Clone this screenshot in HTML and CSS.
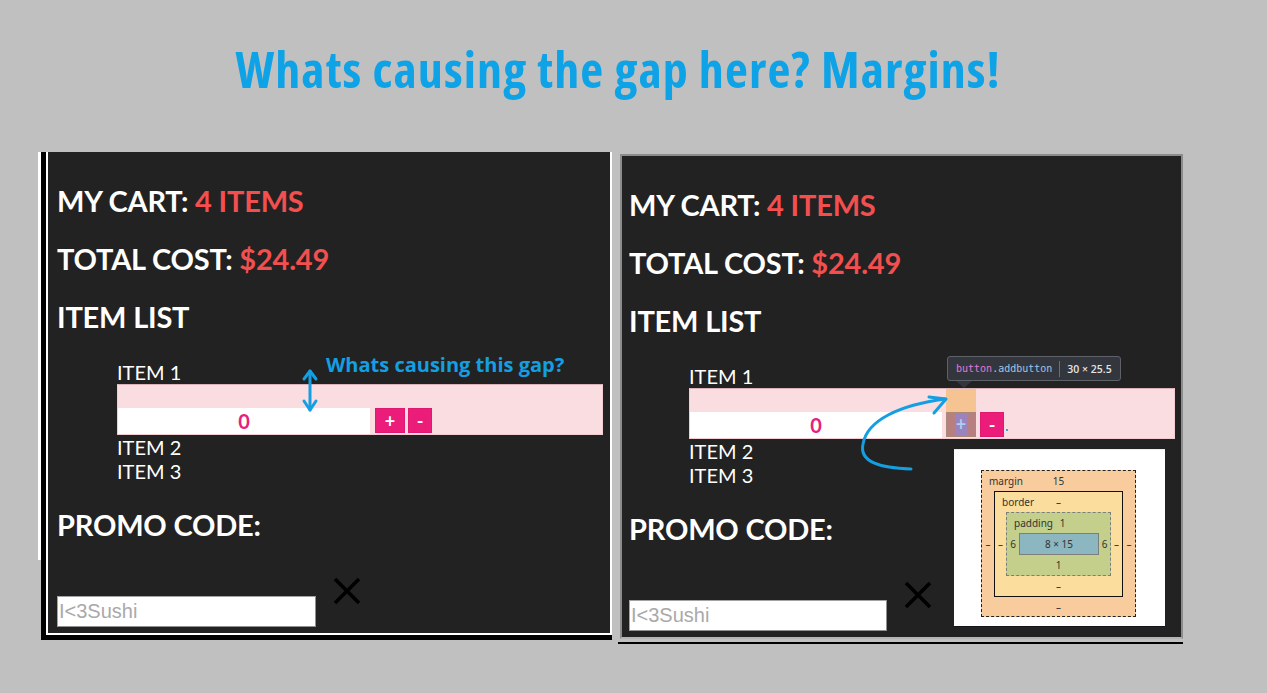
FILE: index.html
```html
<!DOCTYPE html>
<html lang="en">
<head>
<meta charset="utf-8">
<title>Margins</title>
<link rel="stylesheet" href="styles.css">
</head>
<body>
<h1 class="title">Whats causing the gap here? Margins!</h1>

<main class="stage">
  <div class="frame-left">
    <div class="frame-left-shadow">
      <section class="cart cart-left">
        <h2 class="stat">MY CART: <span class="hl">4 ITEMS</span></h2>
        <h2 class="stat">TOTAL COST: <span class="hl">$24.49</span></h2>
        <h2 class="stat">ITEM LIST</h2>
        <ul class="items">
          <li class="item-name">ITEM 1</li>
          <li class="item-row">
            <input class="qty" type="text" value="0" readonly>
            <button class="addbutton">+</button>
            <button class="subbutton">-</button>
          </li>
          <li class="item-name">ITEM 2</li>
          <li class="item-name">ITEM 3</li>
        </ul>
        <h2 class="stat promo-label">PROMO CODE:</h2>
        <div class="promo">
          <input class="promo-input" type="text" placeholder="I<3Sushi">
          <svg class="close" width="28" height="28" viewBox="0 0 28 28"><path d="M2 2 L26 26 M26 2 L2 26" stroke="#000" stroke-width="3.6" fill="none"/></svg>
        </div>
        <p class="note">Whats causing this gap?</p>
      </section>
    </div>
  </div>

  <div class="frame-right">
    <section class="cart cart-right">
      <h2 class="stat">MY CART: <span class="hl">4 ITEMS</span></h2>
      <h2 class="stat">TOTAL COST: <span class="hl">$24.49</span></h2>
      <h2 class="stat">ITEM LIST</h2>
      <ul class="items">
        <li class="item-name">ITEM 1</li>
        <li class="item-row">
          <input class="qty" type="text" value="0" readonly>
          <span class="inspect"><button class="addbutton addbutton-inspected"><span class="inspect-content">+</span></button></span>
          <button class="subbutton">-</button>
          <span class="dot"></span>
        </li>
        <li class="item-name">ITEM 2</li>
        <li class="item-name">ITEM 3</li>
      </ul>
      <h2 class="stat promo-label">PROMO CODE:</h2>
      <div class="promo">
        <input class="promo-input" type="text" placeholder="I<3Sushi">
        <svg class="close" width="28" height="28" viewBox="0 0 28 28"><path d="M2 2 L26 26 M26 2 L2 26" stroke="#000" stroke-width="3.6" fill="none"/></svg>
      </div>

      <div class="tooltip">
        <span class="tt-tag">button</span><span class="tt-cls">.addbutton</span>
        <span class="tt-sep"></span>
        <span class="tt-size">30 × 25.5</span>
      </div>

      <div class="boxmodel">
        <div class="bm bm-margin">
          <div class="bm-t"><span class="bm-lbl">margin</span>15</div>
          <div class="bm-l">–</div>
          <div class="bm bm-border">
            <div class="bm-t"><span class="bm-lbl">border</span>–</div>
            <div class="bm-l">–</div>
            <div class="bm bm-padding">
              <div class="bm-t"><span class="bm-lbl">padding</span>1</div>
              <div class="bm-l">6</div>
              <div class="bm-content">8 × 15</div>
              <div class="bm-r">6</div>
              <div class="bm-b">1</div>
            </div>
            <div class="bm-r">–</div>
            <div class="bm-b">–</div>
          </div>
          <div class="bm-r">–</div>
          <div class="bm-b">–</div>
        </div>
      </div>
    </section>
  </div>
</main>

<svg class="annot" width="1267" height="693" viewBox="0 0 1267 693">
  <g stroke="#139fe2" stroke-width="3" fill="none" stroke-linecap="round" stroke-linejoin="round">
    <path d="M310 371 L310 410"/>
    <path d="M304 379 L310 371 L316 379"/>
    <path d="M304 401 L310 410 L316 401"/>
    <path d="M911 469 C880 468, 859 462, 863 444 C867 420, 900 405, 945 399"/>
    <path d="M929 397 L946 399 L934 413"/>
  </g>
</svg>
</body>
</html>
```

FILE: styles.css
```css
* { box-sizing: border-box; }

html, body {
  margin: 0;
  padding: 0;
}

body {
  width: 1267px;
  height: 693px;
  overflow: hidden;
  position: relative;
  background: #c0c0c0;
  font-family: Lato, "Open Sans", sans-serif;
}

.title {
  margin: 0;
  height: 152px;
  padding: 39px 31px 0 0;
  text-align: center;
  font-family: "Open Sans", sans-serif;
  font-stretch: 75%;
  font-weight: 700;
  font-size: 50px;
  line-height: 60px;
  letter-spacing: 1.1px;
  color: #0ea2e6;
}

.stage {
  display: flex;
  align-items: flex-start;
  padding-left: 38px;
}

/* left screenshot frame */
.frame-left {
  padding-left: 3px;
  background: linear-gradient(#fff, #fff) no-repeat left top / 3px 408px;
}

.frame-left-shadow {
  border-left: 5px solid #000;
  border-bottom: 5px solid #000;
}

.cart {
  position: relative;
  background: #222;
  color: #fff;
  padding-top: 32px;
  padding-bottom: 6px;
}

.cart-left {
  width: 566px;
  border: 2px solid #fff;
  border-top: 0;
  padding-left: 9px;
  padding-right: 7px;
}

/* right screenshot frame */
.frame-right {
  margin-left: 6px;
  margin-top: 2px;
  padding-left: 2px;
  padding-bottom: 3px;
  border-bottom: 2px solid #000;
}

.cart-right {
  width: 563px;
  border: 2px solid #8c8c8c;
  border-bottom-color: #b4b4b4;
  padding-left: 7px;
  padding-right: 6px;
}

.stat {
  margin: 0;
  font-family: Lato, sans-serif;
  font-weight: 700;
  font-size: 29px;
  line-height: 34px;
  letter-spacing: -0.2px;
  color: #fff;
}

.stat + .stat { margin-top: 24px; }

.hl { color: #f44f4f; }

.items {
  list-style: none;
  margin: 26px 0 0 60px;
  padding: 0;
}

.item-name {
  font-family: Lato, sans-serif;
  font-size: 20px;
  line-height: 24px;
  height: 24px;
  color: #fff;
}

.item-row {
  display: flex;
  align-items: flex-start;
  height: 51px;
  background: #f9dde1;
  border: 1px solid #f1cdd2;
  border-top-color: #dcb3b8;
}

.qty {
  width: 252px;
  height: 26px;
  margin: 23px 0 0 0;
  padding: 0;
  border: 0;
  background: #fff;
  text-align: center;
  font-family: Lato, sans-serif;
  font-weight: 700;
  font-size: 20px;
  color: #e8207a;
  outline: none;
}

.addbutton,
.subbutton {
  height: 25px;
  margin-top: 23px;
  padding: 0;
  border: 1px solid #e0186f;
  background: #ec1c7a;
  color: #fff;
  font-family: Lato, sans-serif;
  font-weight: 700;
  font-size: 18px;
  line-height: 22px;
}

.addbutton { width: 30px; margin-left: 5px; }
.subbutton { width: 24px; margin-left: 3px; }

.inspect {
  display: block;
  margin-left: 4px;
  padding-top: 23px;
  background: #f6c492;
}

.addbutton-inspected {
  display: flex;
  justify-content: center;
  margin: 0;
  background: #b77f80;
  border-color: #aa8a76;
}

.inspect-content {
  display: block;
  width: 12px;
  height: 23px;
  background: #9a83bf;
  color: #a9d0f2;
  line-height: 22px;
}

.cart-right .subbutton { margin-left: 4px; }

.dot {
  width: 2px;
  height: 2px;
  margin: 40px 0 0 2px;
  background: #3aa0e0;
}

.promo-label { margin-top: 25px; }

.promo {
  display: flex;
  align-items: flex-start;
  gap: 17px;
  margin-top: 35px;
  margin-left: 0;
}

.promo-input {
  width: 259px;
  height: 31px;
  margin: 19px 0 0 0;
  padding: 0 0 0 1px;
  border: 1px solid #a3a3a3;
  border-right-color: #8f8f8f;
  border-bottom-color: #8f8f8f;
  background: #fff;
  font-family: "Liberation Sans", Arial, sans-serif;
  font-size: 20px;
  color: #333;
  outline: none;
}

.promo-input::placeholder { color: #a9a9a9; }

.close { display: block; }

.cart-right .promo-input { width: 258px; }

/* annotations */
.note {
  position: absolute;
  left: 278px;
  top: 201px;
  margin: 0;
  font-family: "Open Sans", sans-serif;
  font-weight: 700;
  font-size: 20px;
  line-height: 24px;
  color: #139fe2;
  white-space: nowrap;
}

.annot {
  position: absolute;
  left: 0;
  top: 0;
  pointer-events: none;
}

/* devtools tooltip */
.tooltip {
  position: absolute;
  left: 325px;
  top: 200px;
  width: 174px;
  height: 25px;
  display: flex;
  align-items: center;
  padding: 0 0 0 8px;
  background: #33363d;
  border: 1px solid #5e6168;
  border-radius: 3px;
  font-family: "DejaVu Sans Mono", monospace;
  font-size: 10px;
  white-space: nowrap;
}

.tooltip::after {
  content: "";
  position: absolute;
  left: 8px;
  bottom: -8px;
  border-left: 8px solid transparent;
  border-right: 8px solid transparent;
  border-top: 7px solid #33363d;
}

.tt-tag { color: #e07ad8; }
.tt-cls { color: #9ec6ea; }

.tt-sep {
  width: 1px;
  height: 16px;
  margin: 0 7px;
  background: #6b6e75;
}

.tt-size {
  font-family: "Open Sans", sans-serif;
  font-size: 10.5px;
  font-weight: 600;
  color: #e4e4e4;
}

/* devtools box model */
.boxmodel {
  position: absolute;
  left: 332px;
  top: 293px;
  width: 211px;
  height: 177px;
  padding: 20px 0 0 27px;
  background: #fff;
  border-top: 1px solid #ececec;
  box-shadow: 0 1px 0 #14141c;
  font-family: "Noto Sans", "Open Sans", sans-serif;
  font-size: 10px;
  line-height: 12px;
  color: #333;
}

.bm {
  display: grid;
  grid-template-areas:
    "t t t"
    "l c r"
    "b b b";
}

.bm-margin {
  width: 155px;
  height: 147px;
  grid-template-columns: 12px 129px 12px;
  grid-template-rows: 20px 106px 19px;
  background: #f9cc9d;
  border: 1px dashed #222;
}

.bm-border {
  grid-area: c;
  grid-template-columns: 11px 105px 11px;
  grid-template-rows: 20px 64px 20px;
  background: #fbdd9d;
  border: 1px solid #111;
}

.bm-padding {
  grid-area: c;
  grid-template-columns: 12px 80px 11px;
  grid-template-rows: 20px 22px 20px;
  background: #c3cf8a;
  border: 1px dashed #7d7d7d;
}

.bm-content {
  grid-area: c;
  display: flex;
  align-items: center;
  justify-content: center;
  background: #8cb6c0;
  border: 1px solid #7d7d7d;
}

.bm-t,
.bm-b,
.bm-l,
.bm-r {
  display: flex;
  align-items: center;
  justify-content: center;
}

.bm-t { grid-area: t; position: relative; }
.bm-b { grid-area: b; }
.bm-l { grid-area: l; }
.bm-r { grid-area: r; }

.bm-lbl {
  position: absolute;
  left: 7px;
  top: 4px;
}

.bm-padding .bm-t { padding-left: 8px; }
```
